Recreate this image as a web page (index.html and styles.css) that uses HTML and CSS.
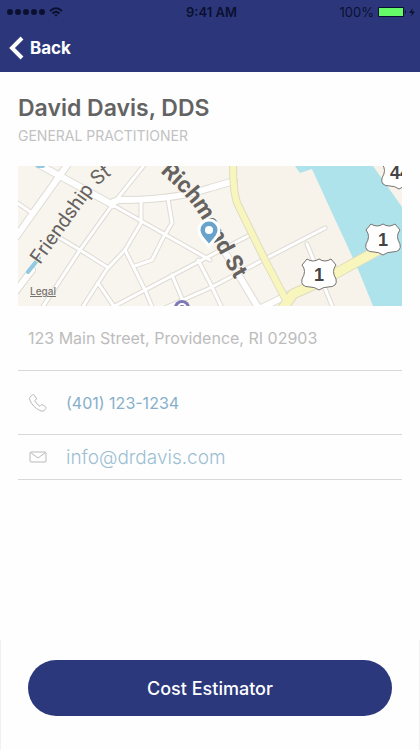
FILE: index.html
```html
<!DOCTYPE html>
<html lang="en">
<head>
  <meta charset="UTF-8">
  <meta name="viewport" content="width=device-width, initial-scale=1.0">
  <title>David Davis, DDS</title>
  <link rel="stylesheet" href="styles.css">
</head>
<body>
  <header class="header">
    <div class="status-bar">
      <div class="status-signal">
        <svg width="38" height="8" viewBox="0 0 38 8" aria-hidden="true">
          <circle cx="3" cy="4" r="3"/><circle cx="11" cy="4" r="3"/><circle cx="19" cy="4" r="3"/><circle cx="27" cy="4" r="3"/><circle cx="35" cy="4" r="3"/>
        </svg>
        <svg width="14" height="10" viewBox="0 0 14 10" fill="none" stroke="#0b1030" stroke-width="2" aria-hidden="true">
          <path d="M1 4 Q7 -1.500 13 4"/><path d="M3.500 6.500 Q7 3.200 10.500 6.500"/><path d="M5.300 7.800 L7 9.700 L8.700 7.800 Q7 6.500 5.300 7.800Z" fill="#0b1030" stroke="none"/>
        </svg>
      </div>
      <span class="status-time">9:41 AM</span>
      <div class="status-battery">
        <span>100%</span>
        <svg width="38" height="10" viewBox="0 0 38 10" aria-hidden="true">
          <rect x="0" y="0" width="26" height="10" rx="1"/>
          <rect x="1" y="1" width="24" height="8" fill="#65fb68"/>
          <path d="M27 3 Q29 5 27 7Z"/>
          <path d="M35 1 L31 6 H34 L33 9.500 L37 4.500 H34Z"/>
        </svg>
      </div>
    </div>
    <nav class="nav">
      <a class="back" href="#">
        <svg width="15" height="24" viewBox="0 0 15 24" aria-hidden="true"><path d="M13 2 L3 12 L13 22" fill="none" stroke="#fff" stroke-width="4"/></svg>
        Back
      </a>
    </nav>
  </header>

  <main class="content">
    <h1 class="name">David Davis, DDS</h1>
    <p class="specialty">GENERAL PRACTITIONER</p>

    <div class="map">
      <svg class="map-drawing" viewBox="0 0 384 140" preserveAspectRatio="xMidYMid slice" role="img" aria-label="Map of the practice">
        <defs>
          <g id="streets">
            <path d="M42 10 L95 39 L192 94"/>
            <path d="M127 -2 L95 38 L62 84 L24 142"/>
            <path d="M123 35 V57 L107 84 L89 103 L64 142"/>
            <path d="M150 33 L154 57 L145 72 L134 94 L117 100"/>
            <path d="M107 84 L127 124 L135 143"/>
            <path d="M42 72 L62 84 L89 101"/>
            <path d="M80 117 L97 142"/>
            <path d="M93 142 L127 124 L180 96 L232 69"/>
            <path d="M154 109 L168 142"/>
            <path d="M140 145 L192 122 L247 93 L307 62"/>
            <path d="M180 94 L192 117 L204 142"/>
            <path d="M289 78 L315 142"/>
            <path d="M-2 36 L14 47"/>
          </g>
          <g id="avenues">
            <path d="M50 -2 L-2 71"/>
            <path d="M20 -2 L42 10 L95 39"/>
            <path d="M95 36 Q102 33 110 34 Q160 33 192 22 L216 15"/>
            <path d="M208 88 L241 143"/>
            <path d="M243 142 L270 129"/>
            <path d="M-2 125 L14 104"/>
          </g>
          <path id="highway" d="M215 -2 Q215 28 220 39 L247 94 L267 132"/>
          <path id="route" d="M263 145 L275 128 L302 116 L355 87 L368 80"/>
          <path id="friendship" d="M22 99 L75 25 Q86 12 106 1"/>
          <path id="richmond" d="M142 6 L159 22 Q174 36 183 52 L200 84 L226 130"/>
          <path id="shield" d="M-12 -15 Q-6 -11 0 -15 Q6 -11 12 -15 L17 -9 Q12 -3 17 5 Q19 13 9 13 Q4 13 0 16 Q-4 13 -9 13 Q-19 13 -17 5 Q-12 -3 -17 -9Z"/>
        </defs>
        <rect width="384" height="140" fill="#f8f5ee"/>
        <path d="M215 0 H384 V140 H267 L219 37Z" fill="#f7f2ea"/>
        <path d="M277 0 L282 7 L294 3 L315 49 Q331 83 342 108 L355 140 H384 V41 L355 0Z" fill="#afe3ec"/>
        <g fill="none" stroke-linejoin="round" stroke-linecap="round">
          <use href="#streets" stroke="#dedbd5" stroke-width="5"/>
          <use href="#avenues" stroke="#dedbd5" stroke-width="8"/>
          <use href="#streets" stroke="#fff" stroke-width="3"/>
          <use href="#avenues" stroke="#fff" stroke-width="6"/>
          <use href="#highway" stroke="#dedcc0" stroke-width="8"/>
          <use href="#route" stroke="#dedcc0" stroke-width="11"/>
          <use href="#highway" stroke="#f8f6bd" stroke-width="6"/>
          <use href="#route" stroke="#f8f6bd" stroke-width="9"/>
          <path d="M10 106 L21 92" stroke="#91c9e3" stroke-width="4"/>
          <path d="M20 0 H25" stroke="#91c9e3" stroke-width="4"/>
        </g>
        <g class="map-street">
          <text class="map-minor"><textPath href="#friendship">Friendship St</textPath></text>
          <text class="map-major"><textPath href="#richmond">Richmond St</textPath></text>
        </g>
        <g fill="#fff" stroke="#77736f">
          <use href="#shield" x="301" y="108"/>
          <use href="#shield" x="365" y="73"/>
          <use href="#shield" x="381" y="7"/>
        </g>
        <g class="map-route">
          <text x="301" y="115">1</text>
          <text x="365" y="80">1</text>
          <text x="382" y="13">44</text>
        </g>
        <circle cx="164" cy="142" r="8" fill="#7c79b5"/>
        <circle cx="164" cy="142" r="4" fill="none" stroke="#fff" stroke-width="2"/>
        <path d="M191 80 C188 75 181 71 181 64 A10 10 0 0 1 201 64 C201 71 194 75 191 80Z" fill="#6aa3c9" stroke="#fff" stroke-width="3"/>
        <circle cx="191" cy="64" r="4" fill="#fff"/>
      </svg>
      <a class="map-legal" href="#">Legal</a>
    </div>

    <address class="contact">
      <p class="row row-address">123 Main Street, Providence, RI 02903</p>
      <a class="row row-phone" href="tel:4011231234">
        <svg class="row-icon" width="20" height="20" viewBox="0 0 20 20" aria-hidden="true">
          <path d="M2 4 L4.500 1.800 Q5.500 1.200 6.300 2.200 L8.200 5 Q8.800 6 7.800 6.800 L6.700 7.700 Q8.500 11 12 13.300 L13 12.200 Q13.800 11.200 14.800 11.900 L17.600 13.800 Q18.500 14.600 17.800 15.500 L16.200 17.600 Q14.500 19 11.500 17.400 Q4.500 13.500 2 7.500 Q1.200 5.300 2 4Z"/>
        </svg>
        (401) 123-1234
      </a>
      <a class="row row-email" href="mailto:info@drdavis.com">
        <svg class="row-icon" width="20" height="20" viewBox="0 0 20 20" aria-hidden="true">
          <rect x="2" y="5" width="16" height="10" rx="1"/><path d="M2.500 5.500 L10 11 L17.500 5.500"/>
        </svg>
        info@drdavis.com
      </a>
    </address>
  </main>

  <footer class="footer">
    <button class="estimate" type="button">Cost Estimator</button>
  </footer>
</body>
</html>
```
FILE: styles.css
```css
* {
  box-sizing: border-box;
}
body {
  display: flex;
  flex-direction: column;
  min-height: 100vh;
  margin: 0;
  background-color: #fefefe;
  color: #636363;
  font-family: Inter, "Liberation Sans", sans-serif;
}
h1, p {
  margin: 0;
}
a {
  text-decoration: none;
}
.header {
  height: 72px;
  background-color: #2c377b;
}
.status-bar {
  display: grid;
  grid-template-columns: 1fr auto 1fr;
  align-items: center;
  height: 24px;
  padding: 0 4px 0 7px;
  color: #0b1030;
  fill: #0b1030;
  font-size: 13px;
}
.status-signal {
  display: flex;
  align-items: center;
  gap: 4px;
}
.status-time {
  font-weight: 600;
}
.status-battery {
  display: flex;
  align-items: center;
  justify-content: flex-end;
  gap: 4px;
}
.nav {
  display: flex;
  align-items: center;
  height: 48px;
  padding: 0 9px;
}
.back {
  display: flex;
  align-items: center;
  gap: 6px;
  color: #fff;
  font-size: 17px;
  font-weight: 700;
}
.content {
  flex: 1;
  padding: 22px 18px 0;
}
.name {
  font-size: 23px;
  line-height: 28px;
  font-weight: 600;
}
.specialty {
  margin: 4px 0 20px;
  color: #c2c2c2;
  font-size: 14px;
  line-height: 20px;
}
.map {
  position: relative;
  height: 140px;
  overflow: hidden;
}
.map-drawing {
  display: block;
  width: 100%;
  height: 100%;
}
.map-street {
  font-family: Roboto, sans-serif;
  fill: #66625f;
  stroke: #f8f5ee;
  stroke-width: 2px;
  paint-order: stroke;
}
.map-minor {
  font-size: 20px;
}
.map-major {
  font-size: 23px;
  font-weight: 700;
}
.map-route {
  fill: #444;
  font-family: "Liberation Sans", sans-serif;
  font-size: 18px;
  font-weight: 700;
  text-anchor: middle;
}
.map-legal {
  position: absolute;
  bottom: 8px;
  left: 12px;
  color: #77736f;
  font-size: 10px;
  font-weight: 500;
  line-height: 14px;
  text-decoration: underline;
}
.contact {
  font-style: normal;
}
.row {
  display: flex;
  align-items: center;
  gap: 18px;
  padding: 0 10px;
  border-bottom: 1px solid #d8d8d8;
  font-size: 16px;
}
.row-address {
  height: 65px;
  color: #bcbcbc;
}
.row-phone {
  height: 64px;
  color: #86afca;
}
.row-email {
  height: 45px;
  color: #9dbfd3;
  font-size: 19px;
  font-weight: 300;
}
.row-icon {
  fill: none;
  stroke: #b9b9b9;
}
.footer {
  padding: 20px 27px 34px;
  border: 1px solid #f1f1f1;
  border-width: 0 1px;
}
.estimate {
  display: block;
  width: 100%;
  height: 56px;
  border: 0;
  border-radius: 28px;
  background-color: #2b387c;
  color: #fff;
  cursor: pointer;
  font: 500 18px Inter, "Liberation Sans", sans-serif;
}
```
